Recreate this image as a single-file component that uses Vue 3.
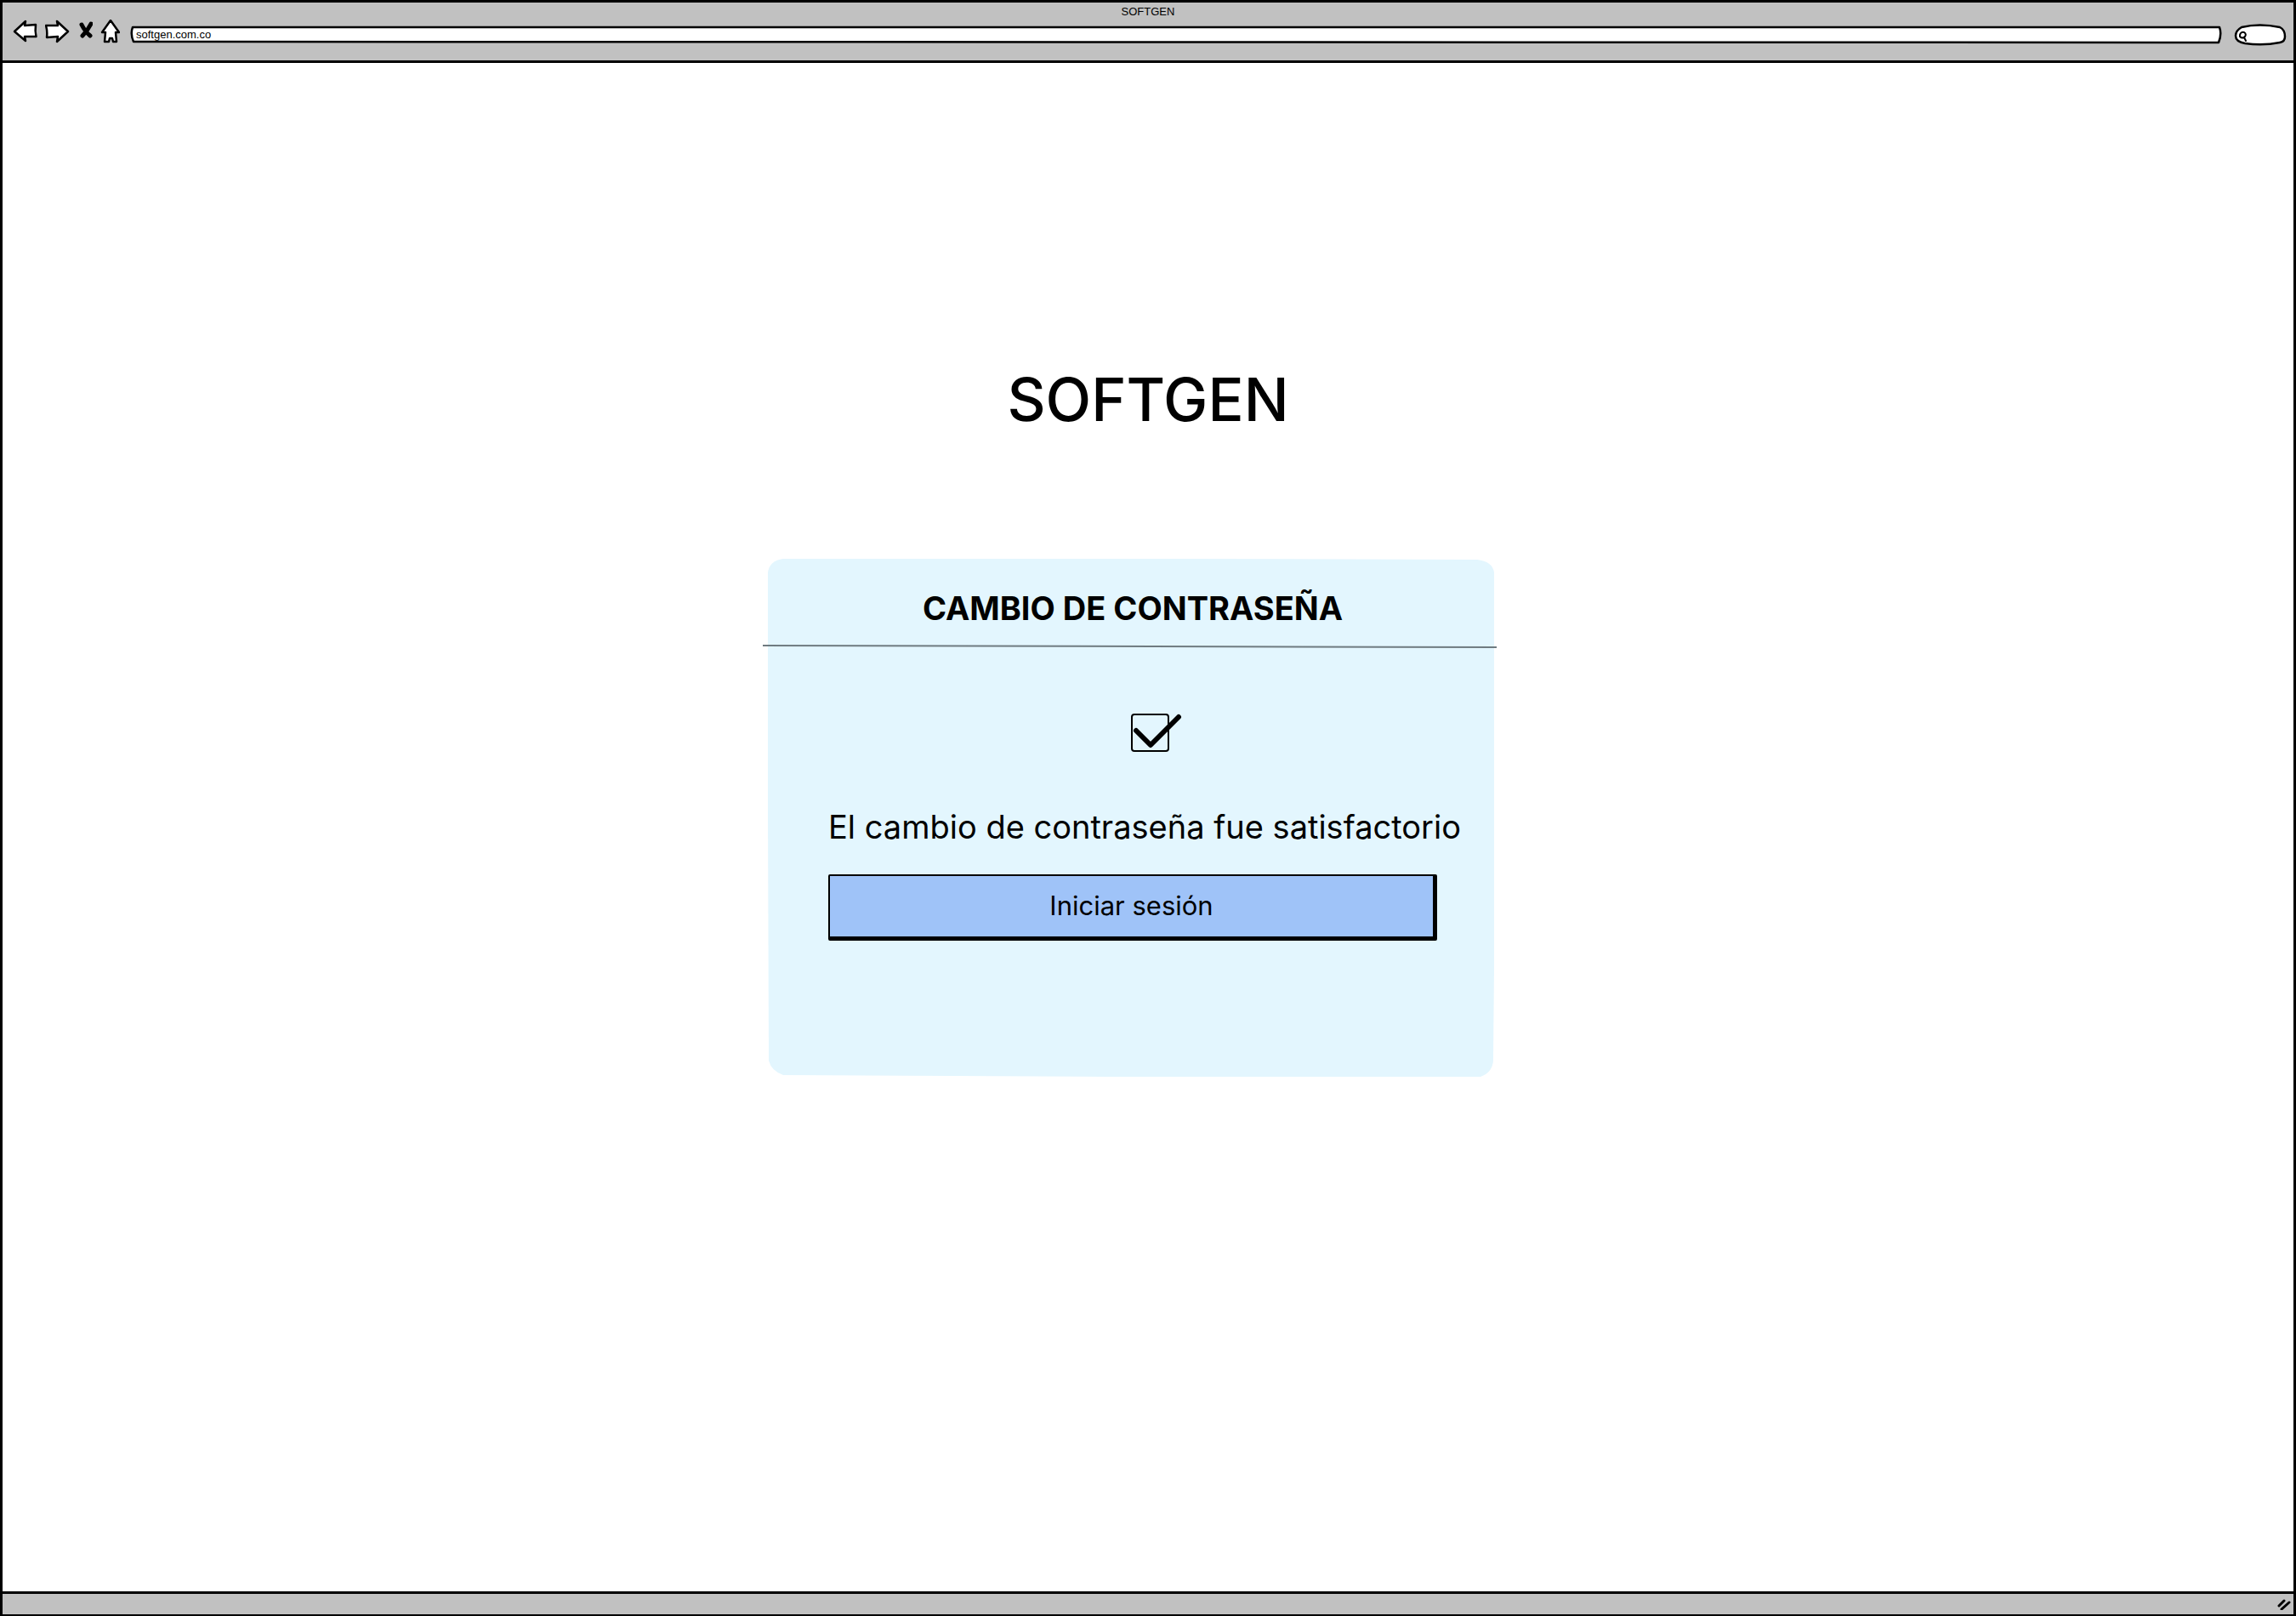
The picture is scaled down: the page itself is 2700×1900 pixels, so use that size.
<script setup>
import { ref } from 'vue'

const address = ref('softgen.com.co')
const query = ref('')
const changed = ref(true)
</script>

<template>
  <div class="window">
    <header class="chrome">
      <div class="window-title">SOFTGEN</div>
      <div class="toolbar">
        <button class="tool" type="button" aria-label="Atrás">
          <svg width="30" height="28" viewBox="0 0 30 28">
            <path d="M2 14 L15 2 L14 7 L27 6 Q26 14 27.500 20 L14 20 L15 25 Z" />
          </svg>
        </button>
        <button class="tool" type="button" aria-label="Adelante">
          <svg width="30" height="28" viewBox="0 0 30 28">
            <path d="M1 7 L15 7 L14 2 L27 14 L14 26 L15 20 L2 21 Q3 14 1 7 Z" />
          </svg>
        </button>
        <button class="tool" type="button" aria-label="Detener">
          <svg width="18" height="28" viewBox="0 0 18 28">
            <path class="cross" d="M5 6 Q9 14 15 19 M16 5 Q12 13 6 19" />
          </svg>
        </button>
        <button class="tool" type="button" aria-label="Inicio">
          <svg width="24" height="28" viewBox="0 0 24 28">
            <path d="M13 1 L23 15 L19 15 L20 26 L16 26 L15 22 L12 22 L11 26 L6 26 L7 15 L3 15 Z" />
          </svg>
        </button>
        <label class="address">
          <svg class="outline" viewBox="0 0 2460 22" preserveAspectRatio="none">
            <path d="M3 2 L2457 2 Q2460 10 2456 20 L4 19 Q0 10 3 2 Z" />
          </svg>
          <input v-model="address" type="text" aria-label="Dirección" />
        </label>
        <label class="search">
          <svg class="outline" viewBox="0 0 62 26">
            <path d="M9 4 Q30 -1 54 4 Q60 7 60 15 Q60 21 54 22 Q34 26 13 23 Q2 21 2 14 Q2 8 9 4 Z" />
            <path class="lens" d="M7 13 Q8 9 12 10 Q15 12 13 15 Q10 18 7 15 Z M12 16 L14 20" />
          </svg>
          <input v-model="query" type="search" aria-label="Buscar" />
        </label>
      </div>
    </header>

    <main class="page">
      <h1>SOFTGEN</h1>
      <section class="card">
        <svg class="card-shape" viewBox="0 0 854 610" preserveAspectRatio="none">
          <path d="M18 0 L500 0 L834 1 Q852 3 854 16 L854 480 L853 590 Q852 604 838 609 L400 609 L18 607 Q4 602 1 590 L0 300 L0 16 Q2 2 18 0 Z" />
        </svg>
        <h2>CAMBIO DE CONTRASEÑA</h2>
        <svg class="rule" viewBox="0 0 863 4" preserveAspectRatio="none">
          <path d="M0 1 L863 3" />
        </svg>
        <div class="result">
          <span class="tick">
            <input id="changed" v-model="changed" type="checkbox" />
            <svg v-if="changed" width="60" height="46" viewBox="0 0 60 46">
              <path d="M6 20 L23 37 L56 4" />
            </svg>
          </span>
          <label for="changed">El cambio de contraseña fue satisfactorio</label>
        </div>
        <button class="login" type="button">Iniciar sesión</button>
      </section>
    </main>

    <footer class="status">
      <svg width="16" height="14" viewBox="0 0 16 14">
        <path d="M2 9 L8 3 M5 13 L14 5" />
      </svg>
    </footer>
  </div>
</template>

<style>
body {
  margin: 0;
  background: #ffffff;
}
</style>

<style scoped>
.window {
  box-sizing: border-box;
  min-height: 100vh;
  display: flex;
  flex-direction: column;
  border: 3px solid #000000;
  border-bottom-width: 2px;
  color: #000000;
  font-family: Inter, sans-serif;
}

button {
  color: inherit;
  font: inherit;
  cursor: pointer;
}

.chrome {
  box-sizing: border-box;
  height: 71px;
  border-bottom: 3px solid #000000;
  background: #c1c1c1;
  font-family: "Liberation Sans", Arial, sans-serif;
}

.window-title {
  padding-top: 3px;
  font-size: 13px;
  line-height: 16px;
  text-align: center;
}

.toolbar {
  display: flex;
  align-items: flex-start;
  padding: 1px 8px 0 12px;
}

.tool {
  display: block;
  padding: 0;
  margin-right: 8px;
  border: 0;
  background: none;
}

.tool svg,
.outline,
.card-shape,
.rule,
.status svg {
  display: block;
}

.tool path,
.outline path {
  fill: #ffffff;
  stroke: #000000;
  stroke-width: 2.500;
  stroke-linejoin: round;
  stroke-linecap: round;
}

.tool .cross {
  fill: none;
  stroke-width: 5;
}

.address,
.search {
  position: relative;
  display: block;
}

.address {
  flex: 1;
  height: 22px;
  margin: 7px 14px 0 4px;
}

.outline {
  position: absolute;
  inset: 0;
  width: 100%;
  height: 100%;
}

.outline .lens {
  fill: none;
  stroke-width: 2;
}

.address input,
.search input {
  position: relative;
  box-sizing: border-box;
  width: 100%;
  height: 100%;
  padding: 0 7px 2px;
  border: 0;
  outline: 0;
  background: none;
  font-family: inherit;
  font-size: 13px;
  color: inherit;
  display: block;
}

.search {
  width: 62px;
  height: 26px;
  margin-top: 5px;
}

.search input {
  padding: 0 8px 0 20px;
}

.page {
  flex: 1;
  display: flex;
  flex-direction: column;
  align-items: center;
  background: #ffffff;
}

h1 {
  margin: 352px 0 0;
  font-size: 70px;
  font-weight: 500;
  line-height: 88px;
}

.card {
  position: relative;
  box-sizing: border-box;
  width: 854px;
  height: 610px;
  margin: 143px 40px 40px 0;
  padding: 34px 67px 0 71px;
}

.card-shape {
  position: absolute;
  inset: 0;
  width: 100%;
  height: 100%;
  fill: #e3f6fe;
}

h2 {
  position: relative;
  margin: 0;
  font-size: 38px;
  font-weight: 700;
  line-height: 48px;
  text-align: center;
}

.rule {
  position: relative;
  width: 863px;
  height: 4px;
  margin: 19px 0 0 -77px;
  fill: none;
  stroke: #6f7b80;
  stroke-width: 2;
}

.result {
  position: relative;
  display: flex;
  flex-direction: column;
  margin-top: 77px;
}

.tick {
  position: relative;
  width: 45px;
  height: 45px;
  margin-left: 356px;
}

.tick input {
  appearance: none;
  box-sizing: border-box;
  display: block;
  width: 45px;
  height: 45px;
  margin: 0;
  border: 2px solid #000000;
  border-radius: 4px;
}

.tick svg {
  position: absolute;
  top: 0;
  left: 0;
  fill: none;
  stroke: #000000;
  stroke-width: 6;
  stroke-linecap: round;
  stroke-linejoin: round;
  pointer-events: none;
}

.result label {
  margin-top: 64px;
  font-size: 38px;
  line-height: 48px;
  white-space: nowrap;
}

.login {
  position: relative;
  box-sizing: border-box;
  display: block;
  width: 100%;
  height: 78px;
  margin-top: 32px;
  padding: 0 0 2px;
  border: solid #000000;
  border-width: 2px 5px 5px 2px;
  border-radius: 2px;
  background: #9fc3f8;
  font-size: 31px;
  line-height: 40px;
}

.status {
  box-sizing: border-box;
  display: flex;
  align-items: center;
  justify-content: flex-end;
  height: 27px;
  padding-right: 3px;
  border-top: 3px solid #000000;
  background: #c1c1c1;
}

.status path {
  fill: none;
  stroke: #000000;
  stroke-width: 3;
  stroke-linecap: round;
}
</style>
